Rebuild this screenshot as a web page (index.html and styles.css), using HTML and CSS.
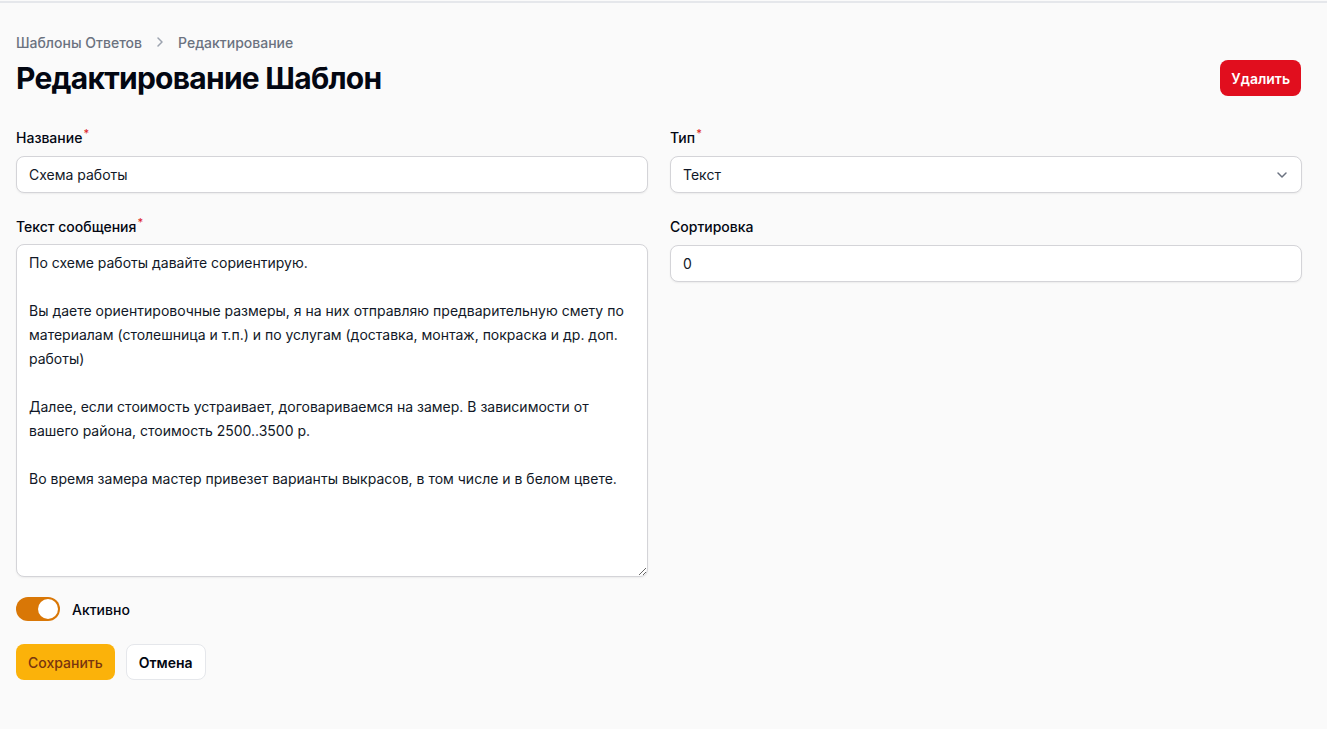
FILE: index.html
```html
<!DOCTYPE html>
<html lang="ru">
<head>
    <meta charset="UTF-8">
    <meta name="viewport" content="width=device-width, initial-scale=1.0">
    <title>Редактирование Шаблон</title>
    <link rel="stylesheet" href="styles.css">
</head>
<body>
    <div class="topline"></div>
    <div class="page">
        <nav class="crumbs">
            <span>Шаблоны Ответов</span>
            <svg class="crumb-sep" width="16" height="16" viewBox="0 0 16 16"><path d="M6 4l4 4-4 4" fill="none" stroke="#9ca3af" stroke-width="1.5" stroke-linecap="round" stroke-linejoin="round"/></svg>
            <span>Редактирование</span>
        </nav>
        <div class="head">
            <h1>Редактирование Шаблон</h1>
            <button class="btn btn-danger">Удалить</button>
        </div>

        <form class="form">
            <div class="field">
                <label>Название<sup>*</sup></label>
                <input class="input" type="text" value="Схема работы">
            </div>
            <div class="field">
                <label>Тип<sup>*</sup></label>
                <div class="select">
                    <span>Текст</span>
                    <svg width="16" height="16" viewBox="0 0 16 16"><path d="M4 6l4 4 4-4" fill="none" stroke="#6b7280" stroke-width="1.5" stroke-linecap="round" stroke-linejoin="round"/></svg>
                </div>
            </div>
            <div class="field">
                <label>Текст сообщения<sup>*</sup></label>
                <textarea class="input area">По схеме работы давайте сориентирую.

Вы даете ориентировочные размеры, я на них отправляю предварительную смету по материалам (столешница и т.п.) и по услугам (доставка, монтаж, покраска и др. доп. работы)

Далее, если стоимость устраивает, договариваемся на замер. В зависимости от вашего района, стоимость 2500..3500 р.

Во время замера мастер привезет варианты выкрасов, в том числе и в белом цвете.</textarea>
            </div>
            <div class="field">
                <label>Сортировка</label>
                <input class="input" type="text" value="0">
            </div>
        </form>

        <div class="toggle-row">
            <span class="toggle"><span class="knob"></span></span>
            <span class="toggle-label">Активно</span>
        </div>

        <div class="actions">
            <button class="btn btn-save">Сохранить</button>
            <button class="btn btn-cancel">Отмена</button>
        </div>
    </div>
</body>
</html>
```

FILE: styles.css
```css
*{
    margin:0;
    padding:0;
    box-sizing:border-box;
}

body{
    background:#fafafa;
    font-family:Inter, "Noto Sans", sans-serif;
    color:#111827;
    font-size:14px;
}

.topline{
    height:2px;
    margin-top:1px;
    background:#e5e7eb;
}

.page{
    padding:29px 25px 40px 16px;
}

.crumbs{
    display:flex;
    align-items:center;
    gap:10px;
    font-size:14px;
    font-weight:500;
    color:#6b7280;
    height:20px;
}

.head{
    display:flex;
    justify-content:space-between;
    align-items:center;
    margin-top:8px;
}
.head h1{
    font-size:30px;
    font-weight:700;
    letter-spacing:-0.75px;
    color:#030712;
    line-height:36px;
}

.btn{
    font-family:inherit;
    font-size:14px;
    font-weight:600;
    border-radius:8px;
    height:36px;
    padding:0 13px;
    border:0;
    cursor:pointer;
}
.btn-danger{
    background:#e10e1e;
    color:#fff;
    padding:0 11px;
    margin-right:1px;
}

.form{
    display:grid;
    grid-template-columns:1fr 1fr;
    column-gap:22px;
    row-gap:24px;
    margin-top:32px;
    align-items:start;
}
.field label{
    display:block;
    font-size:14px;
    font-weight:500;
    color:#030712;
    line-height:20px;
    margin-bottom:8px;
}
.field sup{
    color:#dc2626;
    font-size:11px;
    vertical-align:6px;
    line-height:0;
    margin-left:1px;
}

.input{
    display:block;
    width:100%;
    height:37px;
    border:1px solid #d4d4d8;
    border-radius:8px;
    background:#fff;
    box-shadow:0 1px 2px rgba(0,0,0,0.06);
    font-family:inherit;
    font-size:14px;
    color:#111827;
    padding:0 12px;
    outline:none;
}
.area{
    height:333px;
    padding:6px 12px;
    margin-top:-1px;
    line-height:24px;
    resize:vertical;
}

.select{
    display:flex;
    align-items:center;
    justify-content:space-between;
    height:37px;
    border:1px solid #d4d4d8;
    border-radius:8px;
    background:#fff;
    box-shadow:0 1px 2px rgba(0,0,0,0.06);
    padding:0 11px 0 12px;
}

.toggle-row{
    display:flex;
    align-items:center;
    gap:12px;
    margin-top:20px;
}
.toggle{
    display:flex;
    align-items:center;
    justify-content:flex-end;
    width:44px;
    height:24px;
    border-radius:12px;
    background:#d97706;
    padding:2px;
}
.knob{
    width:20px;
    height:20px;
    border-radius:50%;
    background:#fff;
}
.toggle-label{
    font-weight:500;
    color:#030712;
}

.actions{
    display:flex;
    gap:11px;
    margin-top:23px;
}
.btn-save{
    background:#fbb20a;
    color:#78350f;
    font-weight:500;
    padding:0 12px;
}
.btn-cancel{
    background:#fff;
    border:1px solid #e5e7eb;
    color:#030712;
    padding:0 12px;
    font-weight:600;
}
```
